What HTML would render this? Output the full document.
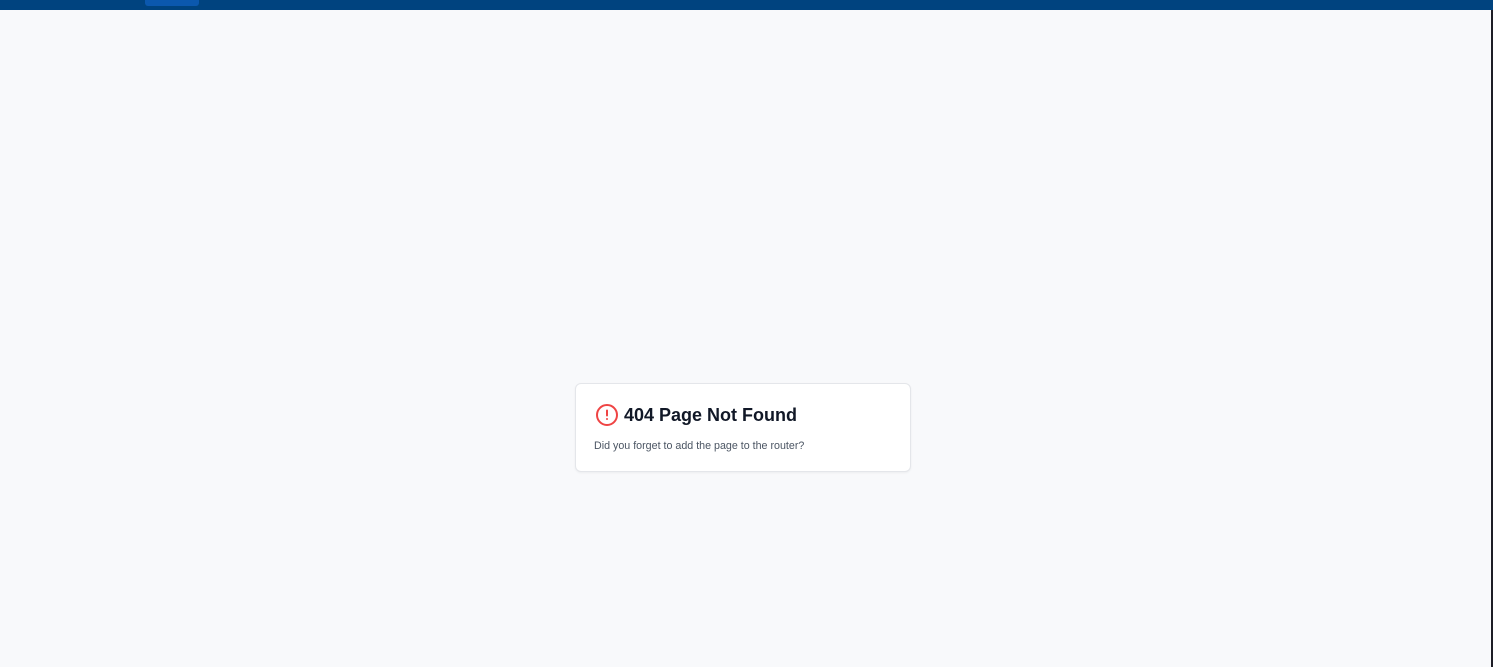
<!DOCTYPE html>
<html><head><meta charset="utf-8"><style>
html,body{margin:0;padding:0}
body{width:1493px;height:667px;background:#f8f9fb;position:relative;overflow:hidden;font-family:"Liberation Sans",sans-serif}
.bar{position:absolute;left:0;top:0;width:1493px;height:10px;background:#00437f}
.btn{position:absolute;left:145px;top:0;width:54px;height:6px;background:#0b58ae;border-radius:0 0 3px 3px}
.edge{position:absolute;right:0;top:10px;width:2px;height:657px;background:#1d1d26}
.card{position:absolute;left:575px;top:383px;width:334px;height:87px;background:#fff;border:1px solid #e4e6ea;border-radius:6px;box-shadow:0 1px 2px rgba(0,0,0,.05);box-sizing:content-box}
.icon{position:absolute;left:19px;top:19px}
.title{position:absolute;left:48px;top:19px;font-size:18px;font-weight:bold;color:#111827;line-height:24px}
.sub{position:absolute;left:18px;top:55px;font-size:10.7px;color:#4b5563;line-height:14px}
</style></head><body>
<div class="bar"><div class="btn"></div></div>
<div class="edge"></div>
<div class="card">
<svg class="icon" width="24" height="24" viewBox="0 0 24 24" fill="none" stroke="#ef4444" stroke-width="2" stroke-linecap="round"><circle cx="12" cy="12" r="10"/><line x1="12" y1="7.5" x2="12" y2="12.5"/><line x1="12" y1="16" x2="12.01" y2="16"/></svg>
<div class="title">404 Page Not Found</div>
<div class="sub">Did you forget to add the page to the router?</div>
</div>
</body></html>
